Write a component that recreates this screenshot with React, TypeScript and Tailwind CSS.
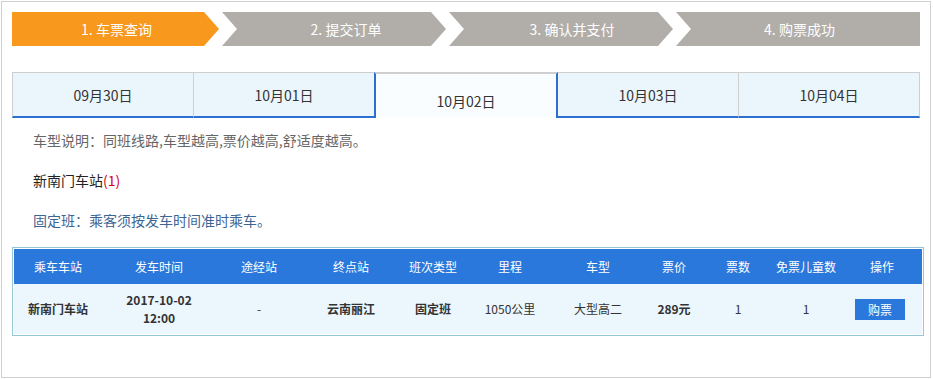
import React from "react";

const steps = ["1. 车票查询", "2. 提交订单", "3. 确认并支付", "4. 购票成功"];
const dates = ["09月30日", "10月01日", "10月02日", "10月03日", "10月04日"];
const activeDate = 2;

const headers = ["乘车车站", "发车时间", "途经站", "终点站", "班次类型", "里程", "车型", "票价", "票数", "免票儿童数", "操作"];

export default function App() {
  return (
    <div className="p-px bg-white" style={{ fontFamily: '"Noto Sans CJK SC", "Liberation Sans", sans-serif' }}>
      <div className="w-[930px] h-[377px] border border-[#d0d0d0] pl-[10px] pt-[10px]">
        {/* Steps */}
        <div className="flex w-[908px] h-[34px] text-white text-[14px]">
          <div className="w-[207px] h-full flex items-center justify-center pl-[2px] bg-[#f8981d] [clip-path:polygon(0_0,calc(100%_-_15px)_0,100%_50%,calc(100%_-_15px)_100%,0_100%)]">
            {steps[0]}
          </div>
          <div className="w-[224px] ml-[3px] h-full flex items-center justify-center pl-[24px] bg-[#b1ada9] [clip-path:polygon(0_0,calc(100%_-_15px)_0,100%_50%,calc(100%_-_15px)_100%,0_100%,15px_50%)]">
            {steps[1]}
          </div>
          <div className="w-[224px] ml-[3px] h-full flex items-center justify-center pl-[22px] bg-[#b1ada9] [clip-path:polygon(0_0,calc(100%_-_15px)_0,100%_50%,calc(100%_-_15px)_100%,0_100%,15px_50%)]">
            {steps[2]}
          </div>
          <div className="w-[244px] ml-[3px] h-full flex items-center justify-center pl-[3px] bg-[#b1ada9] [clip-path:polygon(0_0,100%_0,100%_100%,0_100%,15px_50%)]">
            {steps[3]}
          </div>
        </div>

        {/* Date tabs */}
        <div className="flex w-[908px] h-[46px] mt-[26px] text-[14px] text-[#333]">
          {dates.map((d, i) =>
            i === activeDate ? (
              <div
                key={d}
                className="flex-1 flex items-center justify-center pt-[10px] bg-[#fafdff] border-t-2 border-t-[#cfcfcf] border-x-2 border-x-[#2d6fcf]"
              >
                {d}
              </div>
            ) : (
              <div
                key={d}
                className={`flex-1 flex items-center justify-center pt-[2px] bg-[#ebf6fc] border-t border-t-[#cfcfcf] border-b-2 border-b-[#2d6fcf] ${
                  i === 0 ? "border-l border-l-[#cfcfcf]" : ""
                } ${i !== activeDate - 1 ? "border-r border-r-[#cfcfcf]" : ""}`}
              >
                {d}
              </div>
            )
          )}
        </div>

        {/* Info */}
        <div className="pl-[21px] pt-[2px] text-[14px]">
          <div className="h-[40px] flex items-center text-[#666]">车型说明：同班线路,车型越高,票价越高,舒适度越高。</div>
          <div className="h-[40px] flex items-center text-[#222]">
            新南门车站<span className="text-[#d9001b]">(1)</span>
          </div>
          <div className="h-[40px] flex items-center text-[#3d6594]">固定班：乘客须按发车时间准时乘车。</div>
        </div>

        {/* Table */}
        <div className="w-[912px] mt-[7px] border border-[#95c7d8] p-px text-[12px]">
          <div className="grid grid-cols-[88px_114px_86px_98px_66px_88px_88px_64px_64px_72px_80px] h-[35px] bg-[#2a78dc] text-white items-center text-center">
            {headers.map((h) => (
              <div key={h}>{h}</div>
            ))}
          </div>
          <div className="grid grid-cols-[88px_114px_86px_98px_66px_88px_88px_64px_64px_72px_80px] h-[50px] bg-[#ebf6fd] text-[#333] items-center text-center">
            <div className="font-bold">新南门车站</div>
            <div className="font-bold leading-[18px]">
              2017-10-02
              <br />
              12:00
            </div>
            <div>-</div>
            <div className="font-bold">云南丽江</div>
            <div className="font-bold">固定班</div>
            <div>1050公里</div>
            <div>大型高二</div>
            <div className="font-bold">289元</div>
            <div>1</div>
            <div>1</div>
            <div className="flex justify-center pr-[4px]">
              <button className="w-[50px] h-[21px] bg-[#2a78dc] text-white text-[12px] leading-[21px]">购票</button>
            </div>
          </div>
        </div>
      </div>
    </div>
  );
}
